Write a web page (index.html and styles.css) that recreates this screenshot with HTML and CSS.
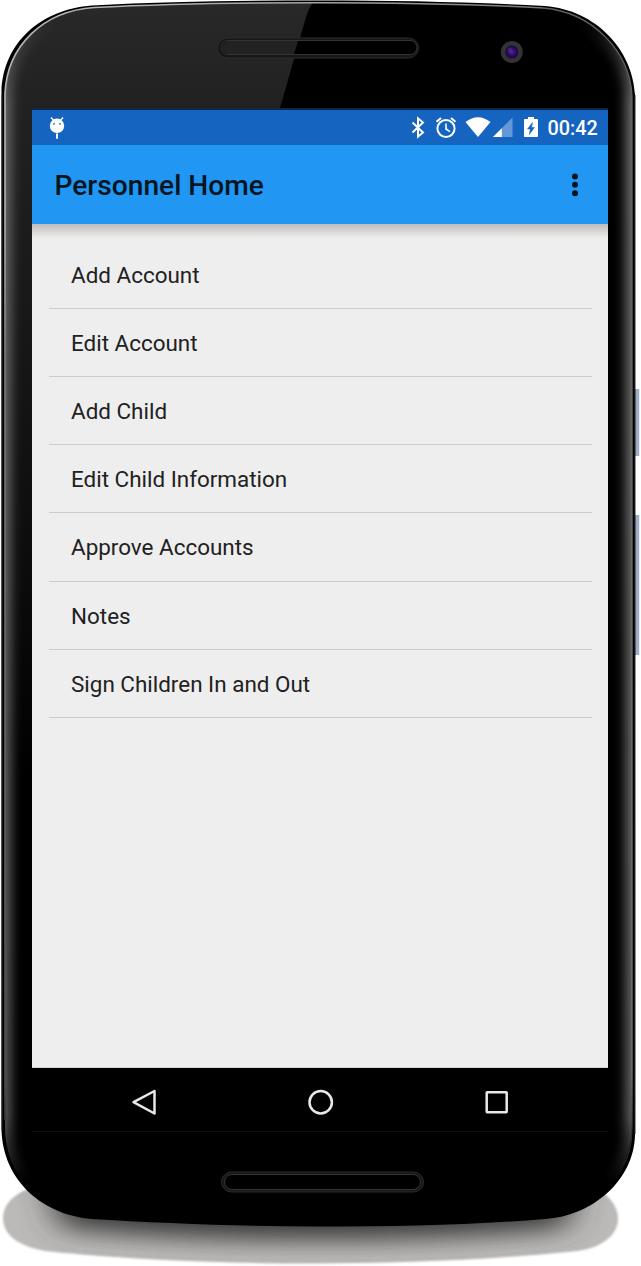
FILE: index.html
```html
<!DOCTYPE html>
<html lang="en">
<head>
<meta charset="utf-8">
<title>Personnel Home</title>
<link rel="stylesheet" href="styles.css">
</head>
<body>
<div class="device">
  <svg class="shell" width="641" height="1266" viewBox="0 0 641 1266" aria-hidden="true">
    <defs>
      <path id="body" d="M1.500 92C3 42 42 9 92 5.500C165 1.500 240 .5 318 .5C400 .5 472 2 545 6C596 10 633 50 635 95V1135C634 1180 593 1216 545 1219C470 1225 400 1226.500 318 1226.500C240 1226.500 160 1223 92 1219C43 1215 3 1181 1.500 1130Z"/>
      <path id="face" d="M5 94C7 45 44 11 94 7.500C165 4 240 2.500 318 2.500C400 2.500 472 4 543 8C592 12 630 51 632 96V1134C631 1177 592 1215 543 1218H94C45 1214 6 1180 5 1128Z"/>
      <clipPath id="faceClip"><use href="#face"/></clipPath>
      <linearGradient id="gloss" x1="0" y1="0" x2="0" y2="780" gradientUnits="userSpaceOnUse"><stop offset="0" stop-color="#292929"/><stop offset=".14" stop-color="#212121"/><stop offset=".4" stop-color="#181818"/><stop offset=".75" stop-color="#0b0b0b"/><stop offset="1" stop-color="#000"/></linearGradient>
      <linearGradient id="glow" x1="0" y1="20" x2="0" y2="1200" gradientUnits="userSpaceOnUse"><stop offset="0" stop-color="#777" stop-opacity="0"/><stop offset=".07" stop-color="#777"/><stop offset=".93" stop-color="#6c6c6c"/><stop offset=".985" stop-color="#666" stop-opacity="0"/></linearGradient>
      <linearGradient id="rimLeft" x1="0" y1="0" x2="0" y2="1200" gradientUnits="userSpaceOnUse"><stop offset="0" stop-color="#b5b5b5"/><stop offset=".18" stop-color="#aaa"/><stop offset=".3" stop-color="#777"/><stop offset=".9" stop-color="#4c4c4c"/><stop offset="1" stop-color="#000"/></linearGradient>
      <linearGradient id="rimTop" x1="92" y1="0" x2="632" y2="0" gradientUnits="userSpaceOnUse"><stop offset="0" stop-color="#b5b5b5"/><stop offset=".5" stop-color="#a0a0a0"/><stop offset="1" stop-color="#606060"/></linearGradient>
      <linearGradient id="rimRight" x1="0" y1="90" x2="0" y2="1180" gradientUnits="userSpaceOnUse"><stop offset="0" stop-color="#606060"/><stop offset=".9" stop-color="#757575"/><stop offset="1" stop-color="#000"/></linearGradient>
      <radialGradient id="lens"><stop offset="0" stop-color="#4b2587"/><stop offset=".6" stop-color="#2b0864"/><stop offset="1" stop-color="#1b073c"/></radialGradient>
      <linearGradient id="button"><stop offset="0" stop-color="#7c8797"/><stop offset=".35" stop-color="#a4b1ca"/><stop offset=".7" stop-color="#9dabc6"/><stop offset=".75" stop-color="#dde5ec"/><stop offset="1" stop-color="#eef3f5"/></linearGradient>
      <path id="shadow" d="M50 1184H575C602 1186 619 1202 618 1221C616 1238 598 1248 578 1251C490 1260 400 1263.500 312 1263.500C215 1263.500 120 1259 45 1251C17 1246 3 1234 3 1218C3 1200 22 1187 50 1184Z"/>
      <clipPath id="shadowClip"><use href="#shadow"/></clipPath>
      <filter id="soft" x="-10%" y="-10%" width="120%" height="120%"><feGaussianBlur stdDeviation="1.300"/></filter>
      <filter id="diffuse" x="-100" y="1100" width="900" height="300" filterUnits="userSpaceOnUse"><feGaussianBlur stdDeviation="17 12"/></filter>
      <filter id="edge" x="-40" y="-40" width="720" height="1340" filterUnits="userSpaceOnUse"><feGaussianBlur stdDeviation="6"/></filter>
      <filter id="fine" x="-40" y="-40" width="720" height="1340" filterUnits="userSpaceOnUse"><feGaussianBlur stdDeviation="1.500"/></filter>
    </defs>
    <use href="#shadow" fill="#bcbab8" filter="url(#soft)"/>
    <g clip-path="url(#shadowClip)">
      <path d="M46 1180H578L565 1228C420 1244 200 1244 62 1228Z" fill="#3a3a3a" filter="url(#diffuse)"/>
    </g>
    <path d="M635 389h5v67h-5zM635 515h5v140h-5z" fill="url(#button)"/>
    <use href="#body" fill="#000"/>
    <g clip-path="url(#faceClip)">
      <path d="M0 0H316Q310 4 306 17L280 108V780H0Z" fill="url(#gloss)"/>
      <g fill="none" stroke="url(#glow)">
        <path d="M94 7.500C44 11 7 45 5 94V1128C6 1180 45 1214 94 1218" stroke-width="10" filter="url(#edge)"/>
        <path d="M94 7.500C44 11 7 45 5 94V1128C6 1180 45 1214 94 1218" stroke-width="3" filter="url(#fine)" opacity=".4"/>
        <path d="M543 8C592 12 630 51 632 96V1134C631 1177 592 1215 543 1218" stroke-width="12" filter="url(#edge)"/>
        <path d="M543 8C592 12 630 51 632 96V1134C631 1177 592 1215 543 1218" stroke-width="3" filter="url(#fine)" opacity=".5"/>
      </g>
    </g>
    <g fill="none">
      <path d="M5 1120V94C7 45 44 11 94 7.500" stroke="url(#rimLeft)" stroke-width="1.700"/>
      <path d="M94 7.500C165 4 240 2.700 318 2.700C400 2.700 472 4 543 8" stroke="url(#rimTop)" stroke-width="1.500"/>
      <path d="M543 8C592 12 630 51 632 96V1125Q632 1145 625 1160" stroke="url(#rimRight)" stroke-width="1.300"/>
      <path d="M2 95V1130M635 95V1134" stroke="#252d2c"/>
    </g>
    <rect x="217.500" y="38" width="201" height="20" rx="10" fill="#171717" stroke="#2c2c2c"/>
    <path d="M228 40.500H410a7 7 0 0 1 0 14H228a7 7 0 0 1 0-14Z" fill="#000" stroke="#343434"/>
    <path d="M228 41H298L294 54H228a6.500 6.500 0 0 1 0-13Z" fill="#222"/>
    <rect x="221.500" y="1172" width="202" height="20" rx="10" fill="#171717" stroke="#2c2c2c"/>
    <rect x="224.500" y="1174.500" width="196" height="15" rx="7.500" fill="#000" stroke="#353535"/>
    <circle cx="511.800" cy="52" r="11" fill="#333"/>
    <circle cx="511.800" cy="52" r="6.600" fill="url(#lens)"/>
    <circle cx="510" cy="50" r="2.500" fill="#62449b" opacity=".35"/>
    <path d="M32 1131.500H608" stroke="#160d0b"/>
  </svg>

  <div class="screen">
    <header class="status-bar">
      <svg class="debug-icon" width="18" height="24" viewBox="0 0 18 24" aria-hidden="true"><path d="M3 1.500l3 3.500M15 1.500l-3 3.500" stroke="#fff" stroke-width="1.500"/><circle cx="9" cy="9.800" r="7.200" fill="#fff"/><path d="M9 17.500v5.300" stroke="#fff" stroke-width="2"/><circle cx="6" cy="7.800" r=".9" fill="#1565c0"/><circle cx="12" cy="7.800" r=".9" fill="#1565c0"/></svg>
      <svg class="status-icons" width="132" height="24" viewBox="0 0 132 24" aria-hidden="true">
        <g fill="none" stroke="#fff"><path d="M2.500 6.500l10.500 10-5 4.200V2.300l5 4.200-10.500 10" stroke-width="2"/>
        <circle cx="36" cy="12.500" r="8.600" stroke-width="2"/><path d="M36 7.500v5.500l4 2.700" stroke-width="1.600"/><path d="M26.500 5.700l4.500-3.700M45.500 5.700l-4.500-3.700" stroke-width="2"/></g>
        <path d="M55.500 6Q68-3.500 80.500 6L68 21Z" fill="#fff"/>
        <path d="M83 21L102.500 1.500V21Z" fill="#6499d7"/><path d="M83 21L91.800 12.200V21Z" fill="#fff"/>
        <path d="M118 1h6v2h3.200q.8 0 .8.800v16.400q0 .8-.8.800h-12.400q-.8 0-.8-.800V3.800q0-.8.800-.8h3.200Z" fill="#fff"/><path d="M122.500 6.500l-5 6.500h2.800l-1 5.500 5.200-7h-2.900Z" fill="#1565c0" stroke="#1565c0" stroke-width=".5"/>
      </svg>
      <time class="clock">00:42</time>
    </header>
    <div class="app-bar">
      <h1 class="title">Personnel Home</h1>
      <svg width="8" height="26" viewBox="0 0 8 26" aria-hidden="true"><g fill="#071520"><circle cx="4" cy="4.400" r="3"/><circle cx="4" cy="12.800" r="3"/><circle cx="4" cy="21.200" r="3"/></g></svg>
    </div>
    <main class="content">
      <ul class="menu">
        <li class="menu-item">Add Account</li>
        <li class="menu-item">Edit Account</li>
        <li class="menu-item">Add Child</li>
        <li class="menu-item">Edit Child Information</li>
        <li class="menu-item">Approve Accounts</li>
        <li class="menu-item">Notes</li>
        <li class="menu-item">Sign Children In and Out</li>
      </ul>
    </main>
    <nav class="nav-bar">
      <svg width="28" height="28" viewBox="0 0 28 28"><path d="M24.500 3V25.500L3.500 14.200Z"/></svg>
      <svg width="28" height="28" viewBox="0 0 28 28"><circle cx="13.700" cy="14.300" r="11.200"/></svg>
      <svg width="28" height="28" viewBox="0 0 28 28"><rect x="3.700" y="4.300" width="20" height="20" rx=".5"/></svg>
    </nav>
  </div>
</div>
</body>
</html>
```
FILE: styles.css
```css
* { box-sizing: border-box; }
body {
  margin: 0;
  background: #fff;
  font-family: Roboto, "Liberation Sans", sans-serif;
  overflow: hidden;
}
.device {
  position: relative;
  width: 641px;
  height: 1266px;
  padding: 108px 33px 0 32px;
}
.shell {
  position: absolute;
  inset: 0;
}
.screen {
  position: relative;
  display: flex;
  flex-direction: column;
  width: 576px;
  height: 1023px;
}
.status-bar {
  display: flex;
  align-items: center;
  height: 37px;
  border-top: 2px solid #0d274b;
  padding: 0 10px 0 16px;
  background: #1565c0;
  color: #fff;
}
.status-icons { margin-left: auto; }
.clock {
  width: 50.500px;
  margin: 2px 0 0 5.500px;
  font-size: 19.800px;
  font-weight: 500;
  line-height: 36px;
  white-space: nowrap;
}
.app-bar {
  position: relative;
  z-index: 1;
  display: flex;
  align-items: center;
  justify-content: space-between;
  height: 79px;
  padding: 0 29px 0 22.500px;
  background: #2196f3;
}
.app-bar::after {
  content: "";
  position: absolute;
  top: 100%;
  left: 0;
  right: 0;
  height: 14px;
  background: linear-gradient(#c0bdbc, #d4d3d2 45%, #eee);
}
.title {
  margin: 3px 0 0;
  color: #071520;
  font-size: 28.150px;
  font-weight: 500;
  line-height: 34px;
}
.content {
  flex: 1;
  padding: 17px 16px 0 17px;
  background: #eee;
  border-bottom: 1px solid #d0d8d3;
}
.menu {
  margin: 0;
  padding: 0;
  list-style: none;
}
.menu-item {
  height: 68.120px;
  padding: 1px 22px 0;
  border-bottom: 1px solid #ccc;
  color: #212121;
  font-size: 22.450px;
  line-height: 66px;
}
.nav-bar {
  display: flex;
  justify-content: space-between;
  align-items: center;
  height: 63px;
  padding: 5px 97px 0 98px;
  background: #000;
  fill: none;
  stroke: #e8e8e8;
  stroke-width: 2.500;
  stroke-linejoin: round;
}
```
